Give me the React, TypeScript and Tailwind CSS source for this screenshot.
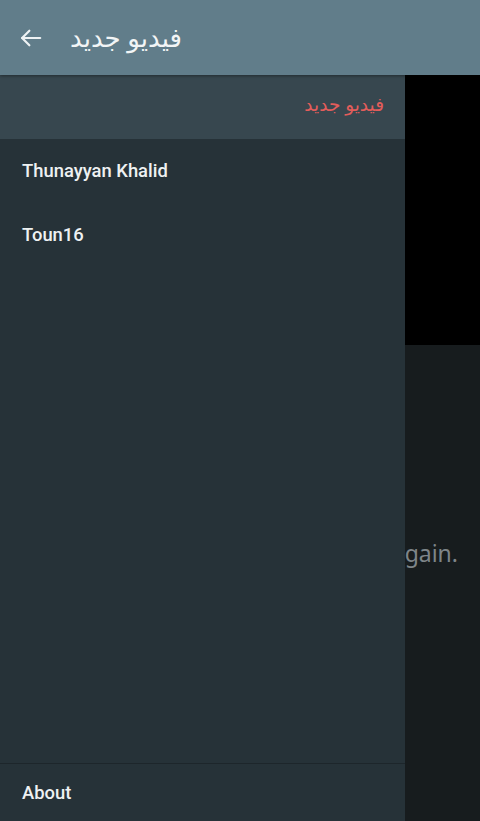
import React from "react";

export default function App() {
  return (
    <div className="relative w-[480px] h-[821px] overflow-hidden bg-[#171c1e]" style={{ fontFamily: "Roboto, 'Noto Sans', sans-serif" }}>
      {/* toolbar */}
      <div className="h-[75px] bg-[#617d8a] flex items-center shadow-[0_1px_3px_rgba(0,0,0,0.4)] relative z-20">
        <div className="w-[62px] flex justify-center">
          <svg width="26" height="26" viewBox="0 0 24 24" fill="none" stroke="#eef2f4" strokeWidth="2" strokeLinecap="round" strokeLinejoin="round">
            <path d="M20.5 12H3.8" />
            <path d="M10.5 5.3L3.8 12l6.7 6.7" />
          </svg>
        </div>
        <div className="pl-[8px] pb-[2px] text-[26px] leading-none text-[#f2f5f6]" style={{ fontFamily: "'Noto Sans', 'DejaVu Sans', sans-serif" }} dir="rtl">
          فيديو جديد
        </div>
      </div>
      {/* content behind drawer */}
      <div className="flex flex-col h-[746px]">
        <div className="h-[270px] bg-black" />
        <div className="flex-1 bg-[#171c1e] flex items-center justify-end pr-[22px] pb-[60px]">
          <span className="text-[23px] text-[#7e8589]" style={{ fontFamily: "'Noto Sans', sans-serif" }}>Please try again.</span>
        </div>
      </div>
      {/* drawer */}
      <div className="absolute left-0 top-[75px] w-[405px] h-[746px] bg-[#263238] flex flex-col z-10">
        <div className="h-[64px] bg-[#37474f] flex items-center justify-end pr-[21px] pb-[5px]">
          <span className="text-[18.5px] leading-none text-[#e35d5b]" style={{ fontFamily: "'Noto Sans', 'DejaVu Sans', sans-serif" }} dir="rtl">فيديو جديد</span>
        </div>
        <div className="h-[64px] flex items-center pl-[22px] text-[18.4px] font-medium text-[#eef1f2]">Thunayyan Khalid</div>
        <div className="h-[64px] flex items-center pl-[22px] text-[18.4px] font-medium text-[#eef1f2]">Toun16</div>
        <div className="flex-1" />
        <div className="h-[1px] bg-[#1d262b]" />
        <div className="h-[57px] flex items-center pl-[22px] text-[18.4px] font-medium text-[#eef1f2]">About</div>
      </div>
    </div>
  );
}
